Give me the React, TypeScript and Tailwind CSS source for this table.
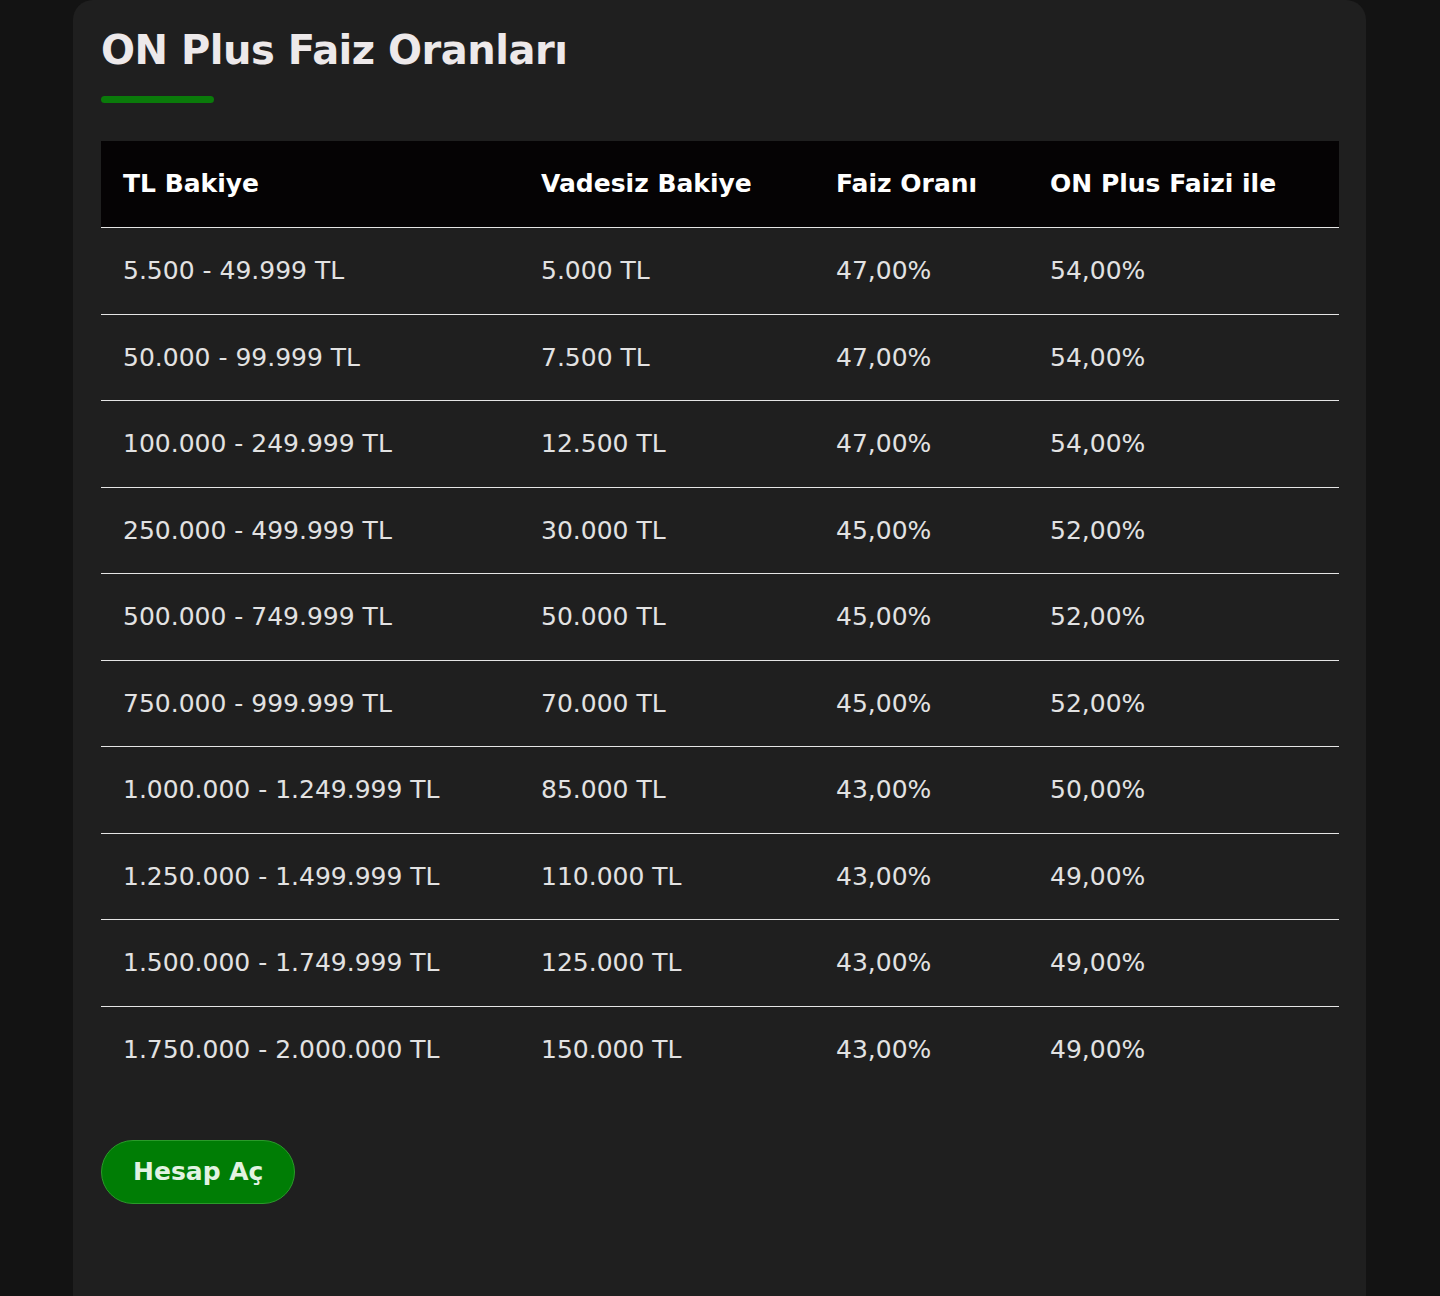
import React from "react";

const rows = [
  ["5.500 - 49.999 TL", "5.000 TL", "47,00%", "54,00%"],
  ["50.000 - 99.999 TL", "7.500 TL", "47,00%", "54,00%"],
  ["100.000 - 249.999 TL", "12.500 TL", "47,00%", "54,00%"],
  ["250.000 - 499.999 TL", "30.000 TL", "45,00%", "52,00%"],
  ["500.000 - 749.999 TL", "50.000 TL", "45,00%", "52,00%"],
  ["750.000 - 999.999 TL", "70.000 TL", "45,00%", "52,00%"],
  ["1.000.000 - 1.249.999 TL", "85.000 TL", "43,00%", "50,00%"],
  ["1.250.000 - 1.499.999 TL", "110.000 TL", "43,00%", "49,00%"],
  ["1.500.000 - 1.749.999 TL", "125.000 TL", "43,00%", "49,00%"],
  ["1.750.000 - 2.000.000 TL", "150.000 TL", "43,00%", "49,00%"],
];

const cols = ["w-[418px]", "w-[295px]", "w-[214px]", "flex-1"];

export default function App() {
  return (
    <div
      className="min-h-[1296px] w-full bg-[#131313] flex pl-[73px]"
      style={{ fontFamily: '"DejaVu Sans", sans-serif' }}
    >
      <div className="w-[1293px] h-[1296px] bg-[#1f1f1f] rounded-t-[20px] px-[28px] pt-[26px]">
        <h1 className="text-[40px] leading-[48px] font-bold text-[#ede9ea] tracking-[-0.5px]">
          ON Plus Faiz Oranları
        </h1>
        <div className="mt-[22px] w-[113px] h-[7px] rounded-full bg-[#0a7a0a]" />
        <div className="mt-[38px] w-[1238px]">
          <div className="flex h-[87px] bg-[#050304] items-center border-b border-[#e5e5e5]">
            {["TL Bakiye", "Vadesiz Bakiye", "Faiz Oranı", "ON Plus Faizi ile"].map((h, i) => (
              <div key={h} className={`${cols[i]} pl-[22px] text-[25px] font-bold text-white`}>
                {h}
              </div>
            ))}
          </div>
          {rows.map((r, ri) => (
            <div
              key={ri}
              className={`flex h-[86.5px] items-center ${ri < rows.length - 1 ? "border-b border-[#e5e5e5]" : ""}`}
            >
              {r.map((c, i) => (
                <div key={i} className={`${cols[i]} pl-[22px] text-[25px] text-[#e2e2e2]`}>
                  {c}
                </div>
              ))}
            </div>
          ))}
        </div>
        <button className="mt-[47px] h-[64px] px-[31px] rounded-full bg-[#007d05] border border-[#2a9a2a] text-[25px] font-semibold text-[#e2f3e2]">
          Hesap Aç
        </button>
      </div>
    </div>
  );
}
